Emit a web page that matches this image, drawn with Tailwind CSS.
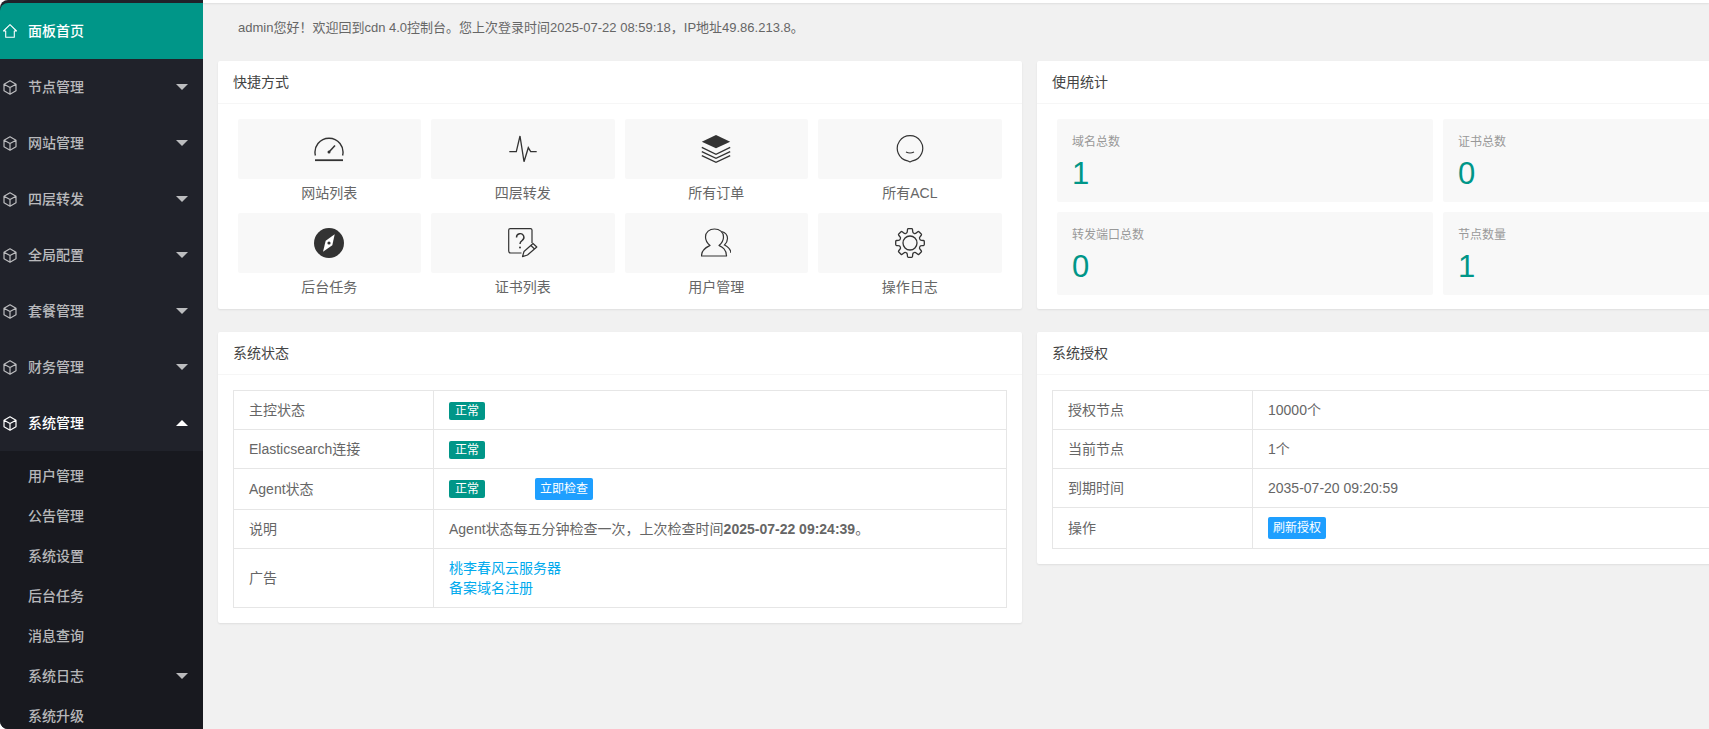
<!DOCTYPE html>
<html lang="zh-CN">
<head>
<meta charset="UTF-8">
<title>cdn 4.0 控制台</title>
<script src="https://cdn.jsdelivr.net/npm/@tailwindcss/browser@4"></script>
</head>
<body class="bg-white font-['Liberation_Sans','Noto_Sans_CJK_SC',sans-serif] text-[14px] text-[#666] overflow-hidden">

<svg class="hidden">
  <symbol id="cube" viewBox="0 0 14 15">
    <path d="M7 .8 13 4.2V10.8L7 14.2 1 10.8V4.2Z M1 4.2 7 7.6 13 4.2 M7 7.6V14.2" fill="none" stroke="currentColor" stroke-width="1.2" stroke-linejoin="round"/>
  </symbol>
  <symbol id="down" viewBox="0 0 12 6"><path d="M0 0H12L6 6Z" fill="currentColor"/></symbol>
</svg>

<div class="flex h-[729px] w-[1709px] overflow-hidden">
  <!-- Sidebar -->
  <aside class="w-[203px] h-[729px] shrink-0 overflow-hidden bg-[#20222a] rounded-l-[8px] pt-[3px] text-[14px] font-medium text-white/70">
    <a class="flex items-center h-[56px] bg-[#009688] text-white rounded-tl-[8px] pl-[3px]">
      <svg class="w-[14px] h-[14px] mr-[11px]" viewBox="0 0 14 14" fill="none" stroke="currentColor" stroke-width="1.1"><path d="M.5 7 7 .7 13.5 7H11.3V13.3H2.7V7Z" stroke-linejoin="round"/></svg>
      面板首页
    </a>
    <a class="flex items-center h-[56px] pl-[3px] pr-[15px]"><svg class="w-[14px] h-[15px] mr-[11px]"><use href="#cube"/></svg>节点管理<svg class="w-[12px] h-[6px] ml-auto"><use href="#down"/></svg></a>
    <a class="flex items-center h-[56px] pl-[3px] pr-[15px]"><svg class="w-[14px] h-[15px] mr-[11px]"><use href="#cube"/></svg>网站管理<svg class="w-[12px] h-[6px] ml-auto"><use href="#down"/></svg></a>
    <a class="flex items-center h-[56px] pl-[3px] pr-[15px]"><svg class="w-[14px] h-[15px] mr-[11px]"><use href="#cube"/></svg>四层转发<svg class="w-[12px] h-[6px] ml-auto"><use href="#down"/></svg></a>
    <a class="flex items-center h-[56px] pl-[3px] pr-[15px]"><svg class="w-[14px] h-[15px] mr-[11px]"><use href="#cube"/></svg>全局配置<svg class="w-[12px] h-[6px] ml-auto"><use href="#down"/></svg></a>
    <a class="flex items-center h-[56px] pl-[3px] pr-[15px]"><svg class="w-[14px] h-[15px] mr-[11px]"><use href="#cube"/></svg>套餐管理<svg class="w-[12px] h-[6px] ml-auto"><use href="#down"/></svg></a>
    <a class="flex items-center h-[56px] pl-[3px] pr-[15px]"><svg class="w-[14px] h-[15px] mr-[11px]"><use href="#cube"/></svg>财务管理<svg class="w-[12px] h-[6px] ml-auto"><use href="#down"/></svg></a>
    <a class="flex items-center h-[56px] pl-[3px] pr-[15px] text-white"><svg class="w-[14px] h-[15px] mr-[11px]"><use href="#cube"/></svg>系统管理<svg class="w-[12px] h-[6px] ml-auto rotate-180"><use href="#down"/></svg></a>
    <div class="bg-[#18191f] pt-[5px] pl-[28px] pr-[15px] pb-[5px]">
      <a class="flex items-center h-[40px]">用户管理</a>
      <a class="flex items-center h-[40px]">公告管理</a>
      <a class="flex items-center h-[40px]">系统设置</a>
      <a class="flex items-center h-[40px]">后台任务</a>
      <a class="flex items-center h-[40px]">消息查询</a>
      <a class="flex items-center h-[40px]">系统日志<svg class="w-[12px] h-[6px] ml-auto"><use href="#down"/></svg></a>
      <a class="flex items-center h-[40px]">系统升级</a>
    </div>
  </aside>

  <!-- Main -->
  <main class="flex-1 min-w-0 overflow-hidden bg-[#f1f1f1]">
    <div class="h-[3px] bg-white shadow-[0_1px_2px_rgba(0,0,0,.08)]"></div>
    <div class="w-[1623px] ml-[15px]">
      <p class="h-[50px] leading-[50px] pl-[20px] mb-[8px] text-[13px]">admin您好！欢迎回到cdn 4.0控制台。您上次登录时间2025-07-22 08:59:18，IP地址49.86.213.8。</p>

      <div class="grid grid-cols-2 gap-x-[15px] gap-y-[23px] items-start">
        <!-- 快捷方式 -->
        <section class="h-[248px] bg-white rounded-[2px] shadow-[0_1px_2px_rgba(0,0,0,.08)]">
          <h3 class="h-[43px] leading-[42px] px-[15px] border-b border-[#f6f6f6] text-[14px] text-[#444]">快捷方式</h3>
          <div class="grid grid-cols-4 gap-x-[10px] pl-[19.6px] pr-[20.4px] pt-[15px] text-center">
            <div class="mb-[6px]">
              <div class="flex items-center justify-center h-[60px] bg-[#f8f8f8] rounded-[2px]">
                <svg class="w-[30px] h-[30px]" viewBox="0 0 30 30" fill="none" stroke="#333"><path d="M1.4 21.5A14 14 0 1 1 28.6 21.5" stroke-width="1.4"/><path d="M1 26.2H29" stroke-width="1.8"/><path d="M15 18 21 11.5" stroke-width="1.5"/><circle cx="15" cy="18" r="1.5" fill="#333" stroke="none"/></svg>
              </div>
              <div class="h-[28px] leading-[28px]">网站列表</div>
            </div>
            <div class="mb-[6px]">
              <div class="flex items-center justify-center h-[60px] bg-[#f8f8f8] rounded-[2px]">
                <svg class="w-[30px] h-[30px]" viewBox="0 0 30 30" fill="none" stroke="#333" stroke-width="1.3"><path d="M1.3 17.7H8.3L12 2 16 27.7 20.3 13.7 22.7 17.7H28.7"/></svg>
              </div>
              <div class="h-[28px] leading-[28px]">四层转发</div>
            </div>
            <div class="mb-[6px]">
              <div class="flex items-center justify-center h-[60px] bg-[#f8f8f8] rounded-[2px]">
                <svg class="w-[30px] h-[30px]" viewBox="0 0 30 30" fill="none" stroke="#333" stroke-width="1.4"><path d="M15 1 29.2 7.7 15 14.3 .8 7.7Z" fill="#333" stroke="none"/><path d="M.8 13.3 15 20.3 29.2 13.3M.8 17.7 15 24.3 29.2 17.7M.8 21.7 15 28.3 29.2 21.7"/></svg>
              </div>
              <div class="h-[28px] leading-[28px]">所有订单</div>
            </div>
            <div class="mb-[6px]">
              <div class="flex items-center justify-center h-[60px] bg-[#f8f8f8] rounded-[2px]">
                <svg class="w-[30px] h-[30px]" viewBox="0 0 30 30" fill="none" stroke="#333" stroke-width="1.2"><path d="M12.5 26.8A12.7 12.7 0 1 1 17.5 26.8L15 28Z" stroke-linejoin="round"/><path d="M11 18Q15 20 19 18"/></svg>
              </div>
              <div class="h-[28px] leading-[28px]">所有ACL</div>
            </div>
            <div class="mb-[6px]">
              <div class="flex items-center justify-center h-[60px] bg-[#f8f8f8] rounded-[2px]">
                <svg class="w-[30px] h-[30px]" viewBox="0 0 30 30"><circle cx="15" cy="15" r="15" fill="#333"/><path d="M20.7 6.3 18.3 17.2 9 23.7 11.7 12.8Z" fill="#fff"/><circle cx="15" cy="15" r="1.6" fill="#333"/></svg>
              </div>
              <div class="h-[28px] leading-[28px]">后台任务</div>
            </div>
            <div class="mb-[6px]">
              <div class="flex items-center justify-center h-[60px] bg-[#f8f8f8] rounded-[2px]">
                <svg class="w-[30px] h-[30px]" viewBox="0 0 30 30" fill="none" stroke="#333" stroke-width="1.2"><path d="M24 15V2A1.5 1.5 0 0 0 22.5 .6H2.2A1.5 1.5 0 0 0 .7 2V23A2 2 0 0 0 2.7 25H13.5"/><path d="M8.5 9.5A3.7 3.7 0 1 1 14 12.6C12.5 13.5 12 14.3 12 16" stroke-width="1.4"/><circle cx="12" cy="19.5" r="1" fill="#333" stroke="none"/><path d="M14.5 28.6 16 23.5 25 15.5 28.8 19 19.5 27ZM23 17.5 26.5 21" stroke-linejoin="round"/></svg>
              </div>
              <div class="h-[28px] leading-[28px]">证书列表</div>
            </div>
            <div class="mb-[6px]">
              <div class="flex items-center justify-center h-[60px] bg-[#f8f8f8] rounded-[2px]">
                <svg class="w-[30px] h-[30px]" viewBox="0 0 30 30" fill="none" stroke="#333" stroke-width="1.2"><path d="M.5 28H25.5C25.5 21 21 19 18 17.5 21 15 22.5 12 22.5 9 22.5 4 18.5 1 13.5 1 8.5 1 4.5 4 4.5 9 4.5 12 6 15 9 17.5 6 19 .5 21 .5 28Z" stroke-linejoin="round"/><path d="M20.5 3.5C24.5 4.5 26.5 7.5 26.5 10.5 26.5 13.5 25 15.5 23.5 17 26.5 18.5 29.5 21 30 25"/></svg>
              </div>
              <div class="h-[28px] leading-[28px]">用户管理</div>
            </div>
            <div class="mb-[6px]">
              <div class="flex items-center justify-center h-[60px] bg-[#f8f8f8] rounded-[2px]">
                <svg class="w-[30px] h-[30px]" viewBox="0 0 30 30" fill="none" stroke="#333" stroke-width="1.3">
                  <defs><path id="tooth" d="M11 5.3C12 5 12.3 4.5 12.3 3.5L12.5 1.5Q12.6 .7 13.4 .7H16.6Q17.4 .7 17.5 1.5L17.7 3.5C17.7 4.5 18 5 19 5.3"/></defs>
                  <use href="#tooth"/><use href="#tooth" transform="rotate(45 15 15)"/><use href="#tooth" transform="rotate(90 15 15)"/><use href="#tooth" transform="rotate(135 15 15)"/><use href="#tooth" transform="rotate(180 15 15)"/><use href="#tooth" transform="rotate(225 15 15)"/><use href="#tooth" transform="rotate(270 15 15)"/><use href="#tooth" transform="rotate(315 15 15)"/>
                  <circle cx="15" cy="15" r="7"/>
                </svg>
              </div>
              <div class="h-[28px] leading-[28px]">操作日志</div>
            </div>
          </div>
        </section>

        <!-- 使用统计 -->
        <section class="h-[248px] bg-white rounded-[2px] shadow-[0_1px_2px_rgba(0,0,0,.08)]">
          <h3 class="h-[43px] leading-[42px] px-[15px] border-b border-[#f6f6f6] text-[14px] text-[#444]">使用统计</h3>
          <div class="grid grid-cols-[376px_376px] gap-[10px] pl-[20px] pt-[15px]">
            <div class="h-[83px] bg-[#f8f8f8] rounded-[2px] px-[15px] pt-[13px]">
              <p class="text-[12px] leading-[20px] text-[#999]">域名总数</p>
              <p class="text-[31px] leading-[36px] mt-[4px] text-[#009688]">1</p>
            </div>
            <div class="h-[83px] bg-[#f8f8f8] rounded-[2px] px-[15px] pt-[13px]">
              <p class="text-[12px] leading-[20px] text-[#999]">证书总数</p>
              <p class="text-[31px] leading-[36px] mt-[4px] text-[#009688]">0</p>
            </div>
            <div class="h-[83px] bg-[#f8f8f8] rounded-[2px] px-[15px] pt-[13px]">
              <p class="text-[12px] leading-[20px] text-[#999]">转发端口总数</p>
              <p class="text-[31px] leading-[36px] mt-[4px] text-[#009688]">0</p>
            </div>
            <div class="h-[83px] bg-[#f8f8f8] rounded-[2px] px-[15px] pt-[13px]">
              <p class="text-[12px] leading-[20px] text-[#999]">节点数量</p>
              <p class="text-[31px] leading-[36px] mt-[4px] text-[#009688]">1</p>
            </div>
          </div>
        </section>

        <!-- 系统状态 -->
        <section class="bg-white rounded-[2px] shadow-[0_1px_2px_rgba(0,0,0,.08)]">
          <h3 class="h-[43px] leading-[42px] px-[15px] border-b border-[#f6f6f6] text-[14px] text-[#444]">系统状态</h3>
          <div class="p-[15px]">
            <table class="w-full table-fixed border-collapse border border-[#e6e6e6] leading-[20px]">
              <tr>
                <td class="w-[200px] border border-[#e6e6e6] px-[15px] py-[9px]">主控状态</td>
                <td class="border border-[#e6e6e6] px-[15px] py-[9px]"><div class="flex items-end h-[20px]"><span class="h-[18px] leading-[18px] px-[6px] rounded-[2px] bg-[#009688] text-white text-[12px]">正常</span></div></td>
              </tr>
              <tr>
                <td class="border border-[#e6e6e6] px-[15px] py-[9px]">Elasticsearch连接</td>
                <td class="border border-[#e6e6e6] px-[15px] py-[9px]"><div class="flex items-end h-[20px]"><span class="h-[18px] leading-[18px] px-[6px] rounded-[2px] bg-[#009688] text-white text-[12px]">正常</span></div></td>
              </tr>
              <tr>
                <td class="border border-[#e6e6e6] px-[15px] py-[9px]">Agent状态</td>
                <td class="border border-[#e6e6e6] px-[15px] py-[9px]">
                  <div class="flex items-center gap-[50px]">
                    <span class="h-[18px] leading-[18px] px-[6px] rounded-[2px] bg-[#009688] text-white text-[12px]">正常</span>
                    <button class="h-[22px] leading-[22px] px-[5px] rounded-[2px] bg-[#1e9fff] text-white text-[12px]">立即检查</button>
                  </div>
                </td>
              </tr>
              <tr>
                <td class="border border-[#e6e6e6] px-[15px] py-[9px]">说明</td>
                <td class="border border-[#e6e6e6] px-[15px] py-[9px]">Agent状态每五分钟检查一次，上次检查时间<b>2025-07-22 09:24:39</b>。</td>
              </tr>
              <tr>
                <td class="border border-[#e6e6e6] px-[15px] py-[9px]">广告</td>
                <td class="border border-[#e6e6e6] px-[15px] py-[9px] text-[#01aaed]"><a class="block">桃李春风云服务器</a><a class="block">备案域名注册</a></td>
              </tr>
            </table>
          </div>
        </section>

        <!-- 系统授权 -->
        <section class="bg-white rounded-[2px] shadow-[0_1px_2px_rgba(0,0,0,.08)]">
          <h3 class="h-[43px] leading-[42px] px-[15px] border-b border-[#f6f6f6] text-[14px] text-[#444]">系统授权</h3>
          <div class="p-[15px]">
            <table class="w-full table-fixed border-collapse border border-[#e6e6e6] leading-[20px]">
              <tr>
                <td class="w-[200px] border border-[#e6e6e6] px-[15px] py-[9px]">授权节点</td>
                <td class="border border-[#e6e6e6] px-[15px] py-[9px]">10000个</td>
              </tr>
              <tr>
                <td class="border border-[#e6e6e6] px-[15px] py-[9px]">当前节点</td>
                <td class="border border-[#e6e6e6] px-[15px] py-[9px]">1个</td>
              </tr>
              <tr>
                <td class="border border-[#e6e6e6] px-[15px] py-[9px]">到期时间</td>
                <td class="border border-[#e6e6e6] px-[15px] py-[9px]">2035-07-20 09:20:59</td>
              </tr>
              <tr>
                <td class="border border-[#e6e6e6] px-[15px] py-[9px]">操作</td>
                <td class="border border-[#e6e6e6] px-[15px] py-[9px]"><button class="block h-[22px] leading-[22px] px-[5px] rounded-[2px] bg-[#1e9fff] text-white text-[12px]">刷新授权</button></td>
              </tr>
            </table>
          </div>
        </section>
      </div>
    </div>
  </main>
</div>
</body>
</html>
